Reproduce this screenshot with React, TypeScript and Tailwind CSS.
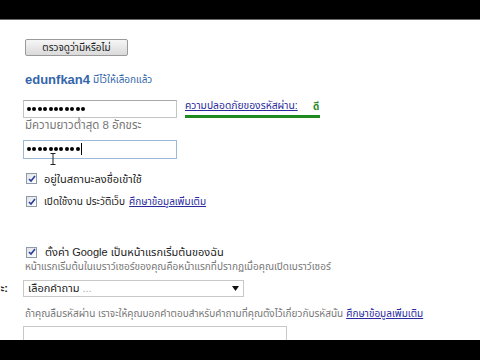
import React from "react";

const F = { fontFamily: '"Liberation Sans", "Noto Sans Thai", "Noto Sans", "DejaVu Sans", sans-serif' };

function Dots({ n }: { n: number }) {
  return (
    <div className="flex items-center gap-[1.4px]">
      {Array.from({ length: n }).map((_, i) => (
        <span key={i} className="inline-block w-[4px] h-[4px] rounded-full bg-black" />
      ))}
    </div>
  );
}

function Check() {
  return (
    <div className="w-[11px] h-[11px] border border-[#8f9aa8] bg-gradient-to-br from-[#dfe3e8] to-[#ffffff] flex items-center justify-center shrink-0">
      <svg width="8" height="8" viewBox="0 0 8 8">
        <path d="M1 4 L3 6 L7 1" stroke="#2a3f9a" strokeWidth="1.6" fill="none" />
      </svg>
    </div>
  );
}

export default function App() {
  return (
    <div className="w-[480px] h-[360px] bg-white overflow-hidden flex flex-col text-[11px] text-[#222]" style={F}>
      <div className="h-[20px] bg-black border-b border-[#6a6a6a] shrink-0" />
      <div className="h-[320px] overflow-hidden flex flex-col relative">
        <div className="pl-[25px] mt-[19px]">
          <div className="w-[103px] h-[17px] border border-[#9a9a9a] rounded-[2px] bg-gradient-to-b from-[#f6f6f6] to-[#dadada] flex items-center justify-center text-[10px] text-[#222]">
            ตรวจดูว่ามีหรือไม่
          </div>
        </div>
        <div className="pl-[25px] mt-[14px] h-[20px] flex items-center gap-[3px]">
          <span className="text-[13px] font-bold text-[#3366aa]">edunfkan4</span>
          <span className="text-[10px] text-[#3366aa]">มีไว้ให้เลือกแล้ว</span>
        </div>
        <div className="pl-[23px] mt-[10px] h-[18px] flex items-start">
          <div className="w-[154px] h-[18px] border border-[#c4c4c4] border-t-[#a8a8a8] flex items-center pl-[3px]">
            <Dots n={11} />
          </div>
          <div className="ml-[8px] flex items-center">
            <div className="flex flex-col">
              <div className="flex items-center h-[13px]">
                <span className="w-[120px] text-[10.3px] text-[#2a2aa0] underline whitespace-nowrap">ความปลอดภัยของรหัสผ่าน:</span>
                <span className="ml-[8px] text-[10px] font-bold text-[#2a8a2a]">ดี</span>
              </div>
              <div className="w-[135px] h-[3px] mt-[2px] bg-[#1f8a1f]" />
            </div>
          </div>
        </div>
        <div className="pl-[25px] h-[16px] flex items-center text-[11.5px] text-[#777]">มีความยาวต่ำสุด 8 อักขระ</div>
        <div className="pl-[23px] mt-[6px] h-[19px] relative">
          <div className="w-[154px] h-[19px] border border-[#9db9d8] flex items-center pl-[3px]">
            <Dots n={10} />
            <span className="ml-[1px] w-[1px] h-[12px] bg-black" />
          </div>
          <svg className="absolute left-[50px] top-[13px]" width="6" height="12" viewBox="0 0 6 12">
            <path d="M0.5 0.5 H5.5 M3 0.5 V11.5 M0.5 11.5 H5.5" stroke="#222" strokeWidth="1" fill="none" />
          </svg>
        </div>
        <div className="pl-[26px] mt-[12px] h-[20px] flex items-center gap-[7px]">
          <Check />
          <span>อยู่ในสถานะลงชื่อเข้าใช้</span>
        </div>
        <div className="pl-[26px] mt-[7px] h-[20px] flex items-center gap-[7px] text-[10px]">
          <Check />
          <span>เปิดใช้งาน ประวัติเว็บ</span>
          <span className="text-[#2a2aa0] underline -ml-[3px]">ศึกษาข้อมูลเพิ่มเติม</span>
        </div>
        <div className="pl-[26px] mt-[35px] h-[20px] flex items-center gap-[8px]">
          <Check />
          <span>ตั้งค่า Google เป็นหน้าแรกเริ่มต้นของฉัน</span>
        </div>
        <div className="pl-[25px] -mt-[1px] h-[14px] flex items-center text-[10px] text-[#777] whitespace-nowrap">
          หน้าแรกเริ่มต้นในเบราว์เซอร์ของคุณคือหน้าแรกที่ปรากฏเมื่อคุณเปิดเบราว์เซอร์
        </div>
        <div className="mt-[6px] h-[17px] flex items-center">
          <span className="w-[23px] font-bold text-[#222] -ml-[14px] text-right pr-[1px]">ะ:</span>
          <div className="ml-[14px] w-[221px] h-[17px] border border-[#c8c8c8] flex items-center pl-[4px] pr-[4px] justify-between">
            <span>เลือกคำถาม <span className="text-[#aaa]">...</span></span>
            <svg width="7" height="5" viewBox="0 0 7 5"><path d="M0 0 H7 L3.5 5 Z" fill="#111" /></svg>
          </div>
        </div>
        <div className="pl-[25px] mt-[9px] h-[16px] flex items-center text-[10px] text-[#777] whitespace-nowrap gap-[3px]">
          <span>ถ้าคุณลืมรหัสผ่าน เราจะให้คุณบอกคำตอบสำหรับคำถามที่คุณตั้งไว้เกี่ยวกับรหัสนั้น</span>
          <span className="text-[#2a2aa0] underline">ศึกษาข้อมูลเพิ่มเติม</span>
        </div>
        <div className="pl-[23px] mt-[5px]">
          <div className="w-[264px] h-[22px] border border-[#c8c8c8]" />
        </div>
      </div>
      <div className="h-[20px] bg-black shrink-0" />
    </div>
  );
}
